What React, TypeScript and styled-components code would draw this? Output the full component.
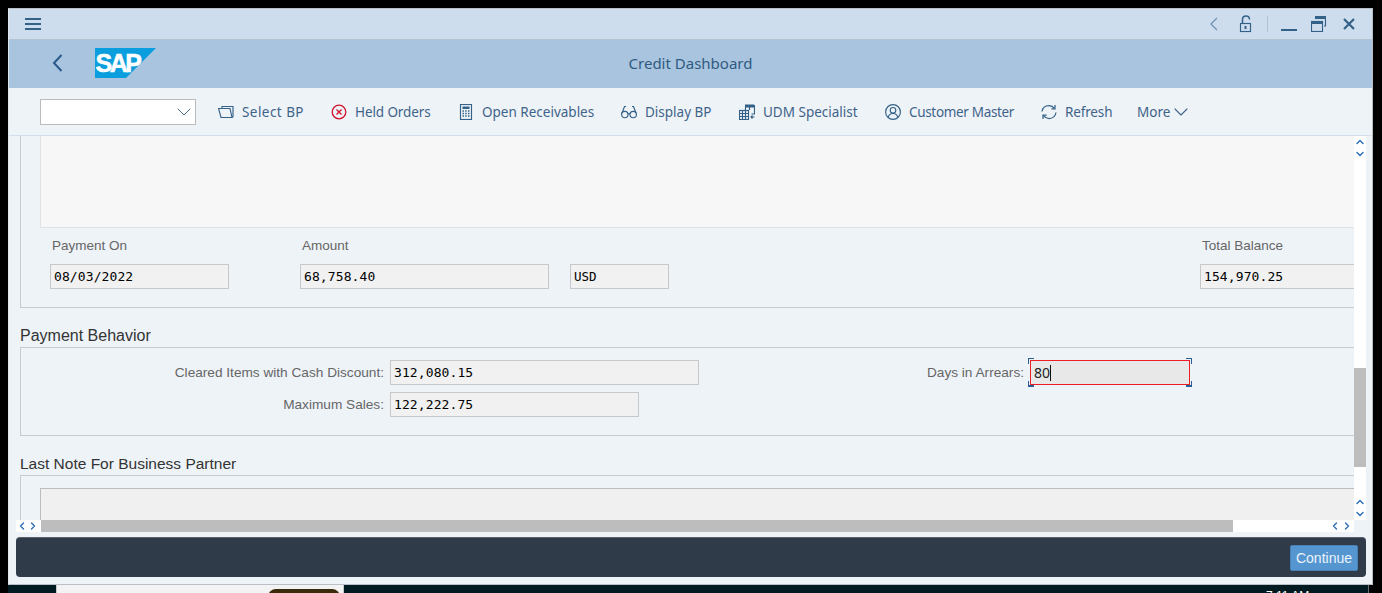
import type { ReactNode } from 'react'
import styled, { createGlobalStyle } from 'styled-components'
import { ChevronDown, ChevronLeft, ChevronRight, ChevronUp } from 'lucide-react'

const GlobalStyle = createGlobalStyle`
  html, body {
    margin: 0;
    padding: 0;
    background: #000;
    overflow: hidden;
  }
  * {
    box-sizing: border-box;
  }
`

const Screen = styled.div`
  width: 1382px;
  height: 593px;
  padding: 8px 0 0 8px;
  background: #000;
  overflow: hidden;
`
const Window = styled.div`
  width: 1365px;
  height: 577px;
  display: flex;
  flex-direction: column;
  background: #eef3f8;
  border-top: 1px solid #b9bfc4;
  border-right: 1px solid #b9bfc4;
  border-bottom: 1px solid #b9bfc4;
  border-left: 1px solid #dfe6ec;
`
const TitleBar = styled.div`
  height: 31px;
  flex: none;
  display: flex;
  align-items: center;
  padding: 0 17px 0 15px;
  background: #cddded;
  border-bottom: 1px solid #b7c4d0;
  color: #346187;
`
const TitleActions = styled.div`
  margin-left: auto;
  display: flex;
  align-items: center;
`
const TitleDivider = styled.span`
  width: 1px;
  height: 16px;
  margin: 0 13px 0 14px;
  background: #b5c0ca;
`
const TitleGap = styled.span<{ $w: number }>`
  width: ${(p) => p.$w}px;
`
const Header = styled.div`
  height: 48px;
  flex: none;
  display: grid;
  grid-template-columns: 1fr auto 1fr;
  align-items: center;
  background: #a9c4de;
`
const HeaderLeft = styled.div`
  display: flex;
  align-items: center;
  padding: 0 0 2px 43px;
`
const HeaderTitle = styled.div`
  padding-bottom: 2px;
  font: 15px 'Noto Sans', sans-serif;
  color: #2f5a82;
`
const LogoSvg = styled.svg`
  display: block;
  margin-left: 32px;
`
const Toolbar = styled.div`
  height: 48px;
  flex: none;
  display: flex;
  align-items: center;
  padding-left: 31px;
  border-bottom: 1px solid #d3dfea;
`
const ComboBox = styled.div`
  width: 156px;
  height: 26px;
  margin-right: 22px;
  display: flex;
  align-items: center;
  justify-content: flex-end;
  background: #fff;
  border: 1px solid #bcbcbc;
  color: #4a7096;
  & svg {
    margin-right: -1px;
  }
`
const ToolButton = styled.div`
  display: flex;
  align-items: center;
  gap: 8px;
  margin-right: 27px;
  color: #3f6389;
`
const ToolLabel = styled.span<{ $width: number; $spacing: number }>`
  width: ${(p) => p.$width}px;
  font: 13.5px 'Noto Sans', sans-serif;
  letter-spacing: ${(p) => p.$spacing}px;
  white-space: nowrap;
`
const MoreButton = styled(ToolButton)`
  gap: 0;
  margin-left: -2px;
  & svg {
    margin-left: -1px;
  }
`
const Body = styled.div`
  height: 384px;
  flex: none;
  display: flex;
`
const Viewport = styled.div`
  width: 1345px;
  padding-left: 11px;
  overflow: hidden;
  display: flex;
  flex-direction: column;
`
const VerticalBar = styled.div`
  width: 12px;
  flex: none;
  display: flex;
  flex-direction: column;
  background: #fff;
`
const ArrowStack = styled.div<{ $bottom?: boolean }>`
  height: 24px;
  flex: none;
  margin-top: ${(p) => (p.$bottom ? 'auto' : '0')};
  display: flex;
  flex-direction: column;
  align-items: center;
  color: #2c6db5;
`
const VerticalThumb = styled.div`
  height: 99px;
  flex: none;
  margin-top: 208px;
  background: #bdbdbd;
`
const Section = styled.div`
  border-left: 1px solid #c9cccf;
  border-bottom: 1px solid #c9cccf;
`
const BlankBox = styled.div`
  height: 92px;
  margin-left: 19px;
  background: #f7f7f7;
  border-left: 1px solid #dfe3e6;
  border-bottom: 1px solid #dfe3e6;
`
const FieldColumns = styled.div`
  height: 79px;
  display: flex;
  padding: 8px 0 0 29px;
`
const FieldColumn = styled.div<{ $width: number; $gap?: number }>`
  width: ${(p) => p.$width}px;
  flex: none;
  margin-right: ${(p) => p.$gap ?? 0}px;
`
const TopLabel = styled.div`
  height: 19px;
  margin-bottom: 9px;
  padding-left: 2px;
  font: 13.5px/19px 'Liberation Sans', sans-serif;
  color: #666;
`
const ValueBox = styled.div<{ $width?: number; $small?: boolean }>`
  height: 25px;
  flex: none;
  width: ${(p) => (p.$width ? `${p.$width}px` : '100%')};
  padding: 1px 0 0 3px;
  background: #f1f1f1;
  border: 1px solid #c6c8ca;
  font: ${(p) => (p.$small ? '12.5px' : '13px')}/22px 'DejaVu Sans Mono', monospace;
  letter-spacing: ${(p) => (p.$small ? '0' : '0.1px')};
  color: #000;
  white-space: nowrap;
`
const SectionTitle = styled.div<{ $size: number }>`
  height: 39px;
  padding-top: 18px;
  font: ${(p) => p.$size}px/20px 'Liberation Sans', sans-serif;
  color: #333;
`
const BehaviorBox = styled.div`
  height: 89px;
  display: flex;
  border: 1px solid #c9cccf;
  border-right: 0;
`
const BehaviorColumn = styled.div<{ $width: number }>`
  width: ${(p) => p.$width}px;
  flex: none;
  padding-top: 12px;
  display: flex;
  flex-direction: column;
  gap: 7px;
`
const FieldRow = styled.div`
  display: flex;
  align-items: center;
`
const RowLabel = styled.div`
  width: 369px;
  flex: none;
  padding-right: 6px;
  text-align: right;
  font: 13.65px/25px 'Liberation Sans', sans-serif;
  color: #666;
`
const ActiveBox = styled.div`
  position: relative;
  width: 160px;
  height: 25px;
  flex: none;
  padding-left: 3px;
  background: #e8e8e8;
  border: 1px solid #ee1c25;
  font: 14px/23px 'Noto Sans', sans-serif;
  color: #222;
`
const Caret = styled.span`
  display: inline-block;
  width: 1px;
  height: 16px;
  vertical-align: -3px;
  background: #111;
`
const Corner = styled.span<{ $v: 'top' | 'bottom'; $h: 'left' | 'right' }>`
  position: absolute;
  ${(p) => p.$v}: -3px;
  ${(p) => p.$h}: -3px;
  width: 6px;
  height: 6px;
  border-${(p) => p.$v}: ${(p) => (p.$v === 'bottom' ? 2 : 1)}px solid #2a5f96;
  border-${(p) => p.$h}: 1px solid #2a5f96;
`
const NoteBox = styled.div`
  height: 45px;
  padding: 12px 0 0 19px;
  border-top: 1px solid #c9cccf;
  border-left: 1px solid #c9cccf;
`
const NoteArea = styled.div`
  height: 100%;
  background: #f0f0f0;
  border-top: 1px solid #bdbdbd;
  border-left: 1px solid #bdbdbd;
`
const HorizontalBar = styled.div`
  height: 12px;
  flex: none;
  width: 1338px;
  margin-left: 7px;
  display: flex;
  align-items: center;
  background: #fff;
  color: #2c6db5;
`
const ArrowPair = styled.div`
  width: 25px;
  flex: none;
  display: flex;
  align-items: center;
  & svg + svg {
    margin-left: -1px;
  }
`
const HorizontalThumb = styled.div`
  width: 1192px;
  height: 100%;
  flex: none;
  background: #bdbdbd;
`
const HorizontalEnd = styled(ArrowPair)`
  margin-left: auto;
  & svg + svg {
    margin-left: 0;
  }
`
const Footer = styled.div`
  height: 40px;
  flex: none;
  width: 1350px;
  margin: 5px 0 0 7px;
  display: flex;
  align-items: center;
  justify-content: flex-end;
  padding-right: 8px;
  background: #2f3b48;
  border-top: 1px solid #56616c;
  border-radius: 4px;
`
const ContinueButton = styled.div`
  width: 68px;
  height: 26px;
  background: #5596d0;
  border: 1px solid #4781b6;
  border-radius: 2px;
  text-align: center;
  font: 14px/24px 'Liberation Sans', sans-serif;
  color: #eaf3fb;
`
const Taskbar = styled.div`
  width: 1361px;
  height: 8px;
  display: flex;
  background: #001a22;
  border-right: 1px solid #5f6d72;
  overflow: hidden;
`
const TaskPanel = styled.div`
  width: 288px;
  height: 8px;
  flex: none;
  margin-left: 48px;
  padding: 4px 0 0 211px;
  background: #f3f3f3;
  border-left: 1px solid #c8c8c8;
  border-right: 1px solid #c8c8c8;
`
const TaskButton = styled.div`
  width: 72px;
  height: 12px;
  background: #3a2a0c;
  border-radius: 8px 8px 0 0;
`
const Clock = styled.div`
  margin: 4px 0 0 922px;
  font: 12px/14px 'Liberation Sans', sans-serif;
  color: #fff;
  white-space: nowrap;
`
const GlyphSvg = styled.svg`
  display: block;
  flex: none;
`

type GlyphProps = { children: ReactNode; color?: string; strokeWidth?: number; w?: number; h?: number }

const Glyph = ({ children, color = '#346187', strokeWidth = 1.15, w = 16, h = 16 }: GlyphProps) => (
  <GlyphSvg width={w} height={h} viewBox={`0 0 ${w} ${h}`} fill="none" stroke={color} strokeWidth={strokeWidth}>
    {children}
  </GlyphSvg>
)

const SapLogo = () => (
  <LogoSvg width="61" height="30" viewBox="0 0 61 30">
    <polygon points="0,0 61,0 31,30 0,30" fill="#0a9ede" />
    <text x="0.5" y="24" fontFamily="Liberation Sans" fontWeight="700" fontSize="25" letterSpacing="-2.5" fill="#fff" stroke="#fff" strokeWidth="0.5">
      SAP
    </text>
  </LogoSvg>
)

const tools: { label: string; width: number; spacing: number; icon: ReactNode }[] = [
  {
    label: 'Select BP',
    width: 62,
    spacing: 0.45,
    icon: (
      <Glyph>
        <path d="M0.5 4.500H12L14 13.500H3L0.500 4.500Z" />
        <path d="M4 4.500V2.500H15V12.500L14 13.500" />
      </Glyph>
    ),
  },
  {
    label: 'Held Orders',
    width: 76,
    spacing: -0.1,
    icon: (
      <Glyph color="#d0112b" strokeWidth={1.3}>
        <circle cx="8" cy="8" r="6.800" />
        <path d="M5.500 5.500l5 5M10.500 5.500l-5 5" />
      </Glyph>
    ),
  },
  {
    label: 'Open Receivables',
    width: 112,
    spacing: 0,
    icon: (
      <Glyph>
        <rect x="2.500" y="0.500" width="11" height="15" />
        <rect x="4.500" y="2.500" width="7" height="2.500" fill="#346187" stroke="none" />
        <path d="M4.500 7h1.500M7.200 7h1.500M10 7h1.500M4.500 9.500h1.500M7.200 9.500h1.500M10 9.500h1.500M4.500 12h1.500M7.200 12h1.500M10 12h1.500" strokeWidth="1.500" />
      </Glyph>
    ),
  },
  {
    label: 'Display BP',
    width: 67,
    spacing: 0,
    icon: (
      <Glyph>
        <circle cx="3.800" cy="10.500" r="3.200" />
        <circle cx="12.200" cy="10.500" r="3.200" />
        <path d="M6.800 10c.8-.7 1.600-.7 2.400 0M1 9l2.500-6.500H5M15 9l-2.500-6.500H11" />
      </Glyph>
    ),
  },
  {
    label: 'UDM Specialist',
    width: 95,
    spacing: 0,
    icon: (
      <Glyph>
        <rect x="0.500" y="6.500" width="9" height="9" />
        <path d="M0.500 9.500h9M0.500 12.500h9M3.500 6.500v9M6.500 6.500v9" />
        <rect x="6" y="0.500" width="9" height="3" fill="#346187" stroke="none" />
        <path d="M6.500 3v3M15.500 1v9h-3M10.500 3v3M12 13h3.500M13.500 11.500L12 13l1.500 1.500" />
      </Glyph>
    ),
  },
  {
    label: 'Customer Master',
    width: 105,
    spacing: -0.33,
    icon: (
      <Glyph>
        <circle cx="8" cy="8" r="7.400" />
        <circle cx="8" cy="6.300" r="2.800" />
        <path d="M3.300 13c.6-2.400 2.400-3.500 4.700-3.500s4.100 1.100 4.700 3.500" />
      </Glyph>
    ),
  },
  {
    label: 'Refresh',
    width: 47,
    spacing: -0.15,
    icon: (
      <Glyph strokeWidth={1.25}>
        <path d="M1 7.500C1.600 3.800 4.500 1.500 8 1.500c2.300 0 4 .9 5.500 2.800" />
        <path d="M15 8.500c-.6 3.700-3.500 6-7 6-2.300 0-4-.9-5.500-2.800" />
        <path d="M14 1v3.800h-3.600M2 15v-3.800h3.600" />
      </Glyph>
    ),
  },
]

export default function App() {
  return (
    <>
      <GlobalStyle />
      <Screen>
        <Window>
          <TitleBar>
            <Glyph w={18} h={14} strokeWidth={2}>
              <path d="M1 2h16M1 7h16M1 12h16" />
            </Glyph>
            <TitleActions>
              <Glyph color="#6f93b8" w={10} h={16} strokeWidth={1.3}>
                <path d="M8 2L2 8l6 6" />
              </Glyph>
              <TitleGap $w={20} />
              <Glyph w={14} h={18}>
                <path d="M3.500 8V4.500C3.500 2.500 5 1 7 1s3.500 1.500 3.500 3.500" strokeWidth={1.5} />
                <rect x="1.500" y="8.500" width="10" height="8" />
                <path d="M6.500 11v3" strokeWidth={2} />
              </Glyph>
              <TitleDivider />
              <Glyph w={16} h={18} strokeWidth={2}>
                <path d="M0 15h16" />
              </Glyph>
              <TitleGap $w={14} />
              <Glyph>
                <rect x="0.500" y="5.500" width="11" height="10" />
                <rect x="0" y="5" width="12" height="3" fill="#346187" stroke="none" />
                <rect x="4" y="0" width="11" height="3" fill="#346187" stroke="none" />
                <path d="M14.500 3v7H13" />
              </Glyph>
              <TitleGap $w={16} />
              <Glyph w={12} h={12} strokeWidth={2.2}>
                <path d="M1 1l10 10M11 1L1 11" />
              </Glyph>
            </TitleActions>
          </TitleBar>
          <Header>
            <HeaderLeft>
              <Glyph w={11} h={18} strokeWidth={2} color="#2a5a8a">
                <path d="M9.500 1L2 9l7.500 8" />
              </Glyph>
              <SapLogo />
            </HeaderLeft>
            <HeaderTitle>Credit Dashboard</HeaderTitle>
            <span />
          </Header>
          <Toolbar>
            <ComboBox>
              <ChevronDown size={24} strokeWidth={1} />
            </ComboBox>
            {tools.map((tool) => (
              <ToolButton key={tool.label}>
                {tool.icon}
                <ToolLabel $width={tool.width} $spacing={tool.spacing}>
                  {tool.label}
                </ToolLabel>
              </ToolButton>
            ))}
            <MoreButton>
              <ToolLabel $width={33} $spacing={0}>
                More
              </ToolLabel>
              <ChevronDown size={24} strokeWidth={1.1} />
            </MoreButton>
          </Toolbar>
          <Body>
            <Viewport>
              <Section>
                <BlankBox />
                <FieldColumns>
                  <FieldColumn $width={179} $gap={71}>
                    <TopLabel>Payment On</TopLabel>
                    <ValueBox>08/03/2022</ValueBox>
                  </FieldColumn>
                  <FieldColumn $width={249} $gap={21}>
                    <TopLabel>Amount</TopLabel>
                    <ValueBox>68,758.40</ValueBox>
                  </FieldColumn>
                  <FieldColumn $width={99} $gap={531}>
                    <TopLabel>&nbsp;</TopLabel>
                    <ValueBox $small>USD</ValueBox>
                  </FieldColumn>
                  <FieldColumn $width={170}>
                    <TopLabel>Total Balance</TopLabel>
                    <ValueBox>154,970.25</ValueBox>
                  </FieldColumn>
                </FieldColumns>
              </Section>
              <SectionTitle $size={16}>Payment Behavior</SectionTitle>
              <BehaviorBox>
                <BehaviorColumn $width={640}>
                  <FieldRow>
                    <RowLabel>Cleared Items with Cash Discount:</RowLabel>
                    <ValueBox $width={309}>312,080.15</ValueBox>
                  </FieldRow>
                  <FieldRow>
                    <RowLabel>Maximum Sales:</RowLabel>
                    <ValueBox $width={249}>122,222.75</ValueBox>
                  </FieldRow>
                </BehaviorColumn>
                <BehaviorColumn $width={560}>
                  <FieldRow>
                    <RowLabel>Days in Arrears:</RowLabel>
                    <ActiveBox>
                      80
                      <Caret />
                      <Corner $v="top" $h="left" />
                      <Corner $v="top" $h="right" />
                      <Corner $v="bottom" $h="left" />
                      <Corner $v="bottom" $h="right" />
                    </ActiveBox>
                  </FieldRow>
                </BehaviorColumn>
              </BehaviorBox>
              <SectionTitle $size={15.5}>Last Note For Business Partner</SectionTitle>
              <NoteBox>
                <NoteArea />
              </NoteBox>
            </Viewport>
            <VerticalBar>
              <ArrowStack>
                <ChevronUp size={12} strokeWidth={2.8} />
                <ChevronDown size={12} strokeWidth={2.8} />
              </ArrowStack>
              <VerticalThumb />
              <ArrowStack $bottom>
                <ChevronUp size={12} strokeWidth={2.8} />
                <ChevronDown size={12} strokeWidth={2.8} />
              </ArrowStack>
            </VerticalBar>
          </Body>
          <HorizontalBar>
            <ArrowPair>
              <ChevronLeft size={12} strokeWidth={2.8} />
              <ChevronRight size={12} strokeWidth={2.8} />
            </ArrowPair>
            <HorizontalThumb />
            <HorizontalEnd>
              <ChevronLeft size={12} strokeWidth={2.8} />
              <ChevronRight size={12} strokeWidth={2.8} />
            </HorizontalEnd>
          </HorizontalBar>
          <Footer>
            <ContinueButton>Continue</ContinueButton>
          </Footer>
        </Window>
        <Taskbar>
          <TaskPanel>
            <TaskButton />
          </TaskPanel>
          <Clock>7:11 AM</Clock>
        </Taskbar>
      </Screen>
    </>
  )
}
